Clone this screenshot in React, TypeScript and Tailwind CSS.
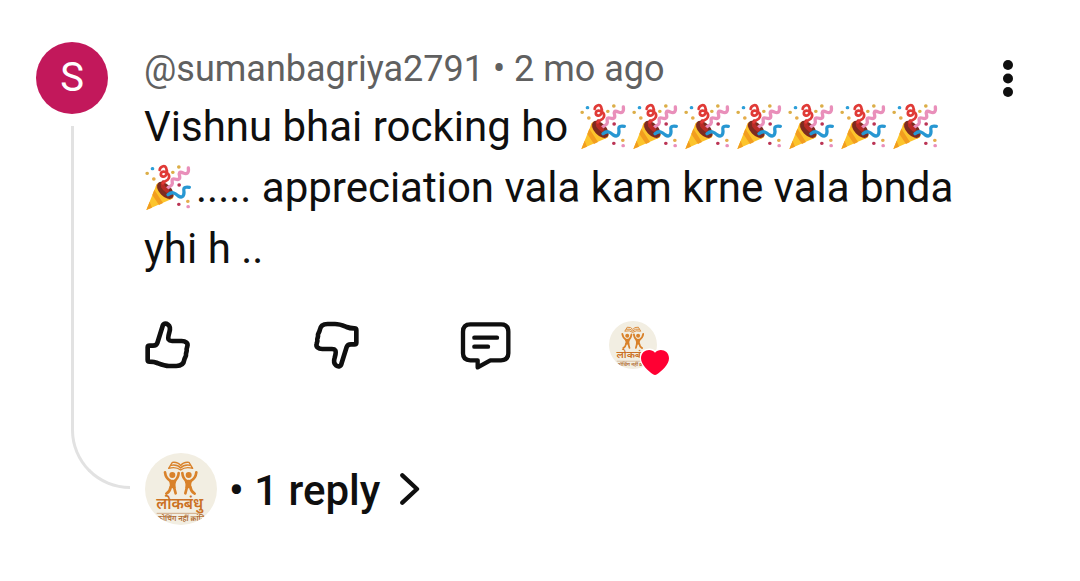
import { clsx } from "clsx"

interface Comment {
  author: string
  time: string
  initial: string
  replies: number
}

const comment: Comment = {
  author: "@sumanbagriya2791",
  time: "2 mo ago",
  initial: "S",
  replies: 1,
}

function PartyPopper() {
  return (
    <svg viewBox="27 22 156 144" role="img" aria-label="🎉" className="inline-block h-12 w-[52px] align-[-9px]">
      <path d="M34 163 L65 86 Q68 78 78 83 L113 117 Q119 125 110 130 Z" fill="#fcc42c" />
      <path d="M34 163 L44 138 L51 156 Z M52 118 L58 102 L84 142 L72 148 Z" fill="#f29d1f" />
      <path d="M65 86 L62 94 Q78 120 104 133 L114 127 Z" fill="#f5a623" />
      <ellipse cx="91" cy="104" rx="31" ry="18" transform="rotate(46 91 104)" fill="#7d2b20" />
      <g fill="none" strokeLinecap="round" strokeLinejoin="round">
        <path d="M160 37 C162 52 156 57 145 52 C132 46 131 53 134 62 C136 74 127 72 119 70 C108 67 112 77 112 84 C111 94 102 90 96 99" stroke="#e98fba" strokeWidth="10" />
        <path d="M96 105 C84 95 79 90 85 80" stroke="#b92b25" strokeWidth="12" />
        <path d="M74 43 C75 32 89 28 93 36 C99 48 94 64 84 63 C74 61 76 48 86 48 C97 48 106 58 101 68 C98 77 85 76 83 83" stroke="#e03a36" strokeWidth="8" />
        <path d="M163 95 C145 92 145 99 147 110 C147 124 139 127 130 121 C119 111 111 107 99 117" stroke="#2797d2" strokeWidth="10" />
      </g>
      <g strokeWidth="10" strokeLinecap="round">
        <path d="M36 53h1 M113 50h1 M131 34h1" stroke="#dcae48" />
        <path d="M56 70h1 M158 137h1" stroke="#e5ad4a" />
        <path d="M52 39h1" stroke="#2d9fd8" />
        <path d="M132 88h1 M131 146h1" stroke="#bb3454" />
        <path d="M159 153h1" stroke="#e98fba" />
      </g>
    </svg>
  )
}

function ThumbIcon({ down = false }: { down?: boolean }) {
  return (
    <svg
      viewBox="32 28 144 150"
      className={clsx("h-[50px] w-12", down && "rotate-180")}
      fill="none"
      stroke="currentColor"
      strokeWidth="14"
      strokeLinejoin="round"
      aria-hidden="true"
    >
      <path d="M46 105 H56 C63 105 67 103 69 97 L84 49 C86 38 94 37 101 42 C108 47 108 55 105 65 C102 76 100 82 103 87 C106 92 110 91 117 91 H142 C154 91 162 98 159 107 C158 111 156 114 157 118 C158 123 154 127 155 132 C156 137 151 140 150 147 C148 161 140 166 126 166 H104 C90 166 79 161 69 157 C60 153 52 153 46 153 Q40 153 40 148 V110 Q40 105 46 105 Z" />
    </svg>
  )
}

function ReplyIcon() {
  return (
    <svg
      viewBox="28 31 156 150"
      className="h-[50px] w-[52px]"
      fill="none"
      stroke="currentColor"
      strokeWidth="13"
      strokeLinecap="round"
      strokeLinejoin="round"
      aria-hidden="true"
    >
      <path d="M62 44 H154 Q176 44 176 66 V131 Q176 152 154 152 H122 L84 173 V152 H62 Q40 152 40 131 V66 Q40 44 62 44 Z" />
      <path d="M74 84 H142 M74 111 H115" />
    </svg>
  )
}

function ChannelAvatar({ className }: { className: string }) {
  return (
    <svg viewBox="0 0 216 216" role="img" aria-label="लोकबंधु" className={clsx("rounded-full", className)}>
      <rect width="216" height="216" fill="#f2eee2" />
      {/* Open book */}
      <g fill="none" stroke="#d9822b" strokeWidth="4" strokeLinejoin="round">
        <path d="M82 28 Q99 26 107 38 Q115 26 132 28 L143 46 Q121 40 107 51 Q93 40 71 46 Z" />
        <path d="M77 37 Q97 33 107 45 Q117 33 137 37" />
      </g>
      {/* Two figures with raised arms */}
      <g fill="#d9822b">
        <circle cx="82" cy="66" r="9" />
        <circle cx="131" cy="66" r="9" />
        <path d="M70 82 Q82 78 95 82 Q90 92 92 106 H73 Q77 92 70 82 Z" />
        <path d="M118 82 Q131 78 143 82 Q136 92 140 106 H121 Q123 92 118 82 Z" />
      </g>
      <g fill="none" stroke="#d9822b" strokeWidth="8" strokeLinecap="round" strokeLinejoin="round">
        <path d="M60 58 Q62 76 77 84 M101 60 Q100 76 88 84 M77 102 Q75 116 64 122 M87 102 L92 121" />
        <path d="M154 58 Q152 76 137 84 M112 60 Q113 76 125 84 M136 102 Q138 116 149 122 M126 102 L121 121" />
      </g>
      <text x="104" y="168" textAnchor="middle" fill="#cb7124" className="font-['Noto_Sans_Devanagari','Noto_Sans',sans-serif] text-[46px] font-semibold">
        लोकबंधु
      </text>
      <path d="M35 181 H166" stroke="#bf8856" strokeWidth="2" />
      <text x="108" y="203" textAnchor="middle" fill="#b06b30" className="font-['Noto_Sans_Devanagari','Noto_Sans',sans-serif] text-[22px] font-semibold">
        कोचिंग नहीं क्रांति
      </text>
    </svg>
  )
}

function HeartBadge() {
  return (
    <svg viewBox="0 0 96 90" className="absolute -right-[14px] -bottom-2 h-[30px] w-8" aria-hidden="true">
      <path
        d="M48 17 C60 2 90 8 90 34 C90 54 68 72 54 82 Q48 86 42 82 C28 72 6 54 6 34 C6 8 36 2 48 17 Z"
        fill="#ff0033"
        stroke="#fff"
        strokeWidth="8"
        paintOrder="stroke"
      />
    </svg>
  )
}

export default function App() {
  return (
    <main className="bg-white px-9 pt-[42px] pb-14 font-['Roboto',sans-serif] text-[#0f0f0f]">
      <article className="flex">
        {/* Avatar and thread line */}
        <div className="flex w-[108px] shrink-0 flex-col">
          <div className="flex size-[72px] items-center justify-center rounded-full bg-[#c2185b] text-[40px] text-white">
            {comment.initial}
          </div>
          <div className="mt-3 mr-[14px] mb-9 ml-[35px] flex-1 rounded-bl-[60px] border-b-3 border-l-3 border-[#e2e2e2]" />
        </div>

        <div className="min-w-0 flex-1">
          <header className="text-[36px] leading-[54px] text-[#606060]">
            {comment.author} • {comment.time}
          </header>
          <p className="text-[42px] leading-[61px]">
            Vishnu bhai rocking ho{" "}
            {Array.from({ length: 8 }, (_, i) => (
              <PartyPopper key={i} />
            ))}
            ..... appreciation vala kam krne vala bnda yhi h ..
          </p>

          {/* Actions */}
          <div className="mt-[41px] flex items-center gap-[98px] pl-px">
            <button type="button" aria-label="Like" className="w-[68px]">
              <ThumbIcon />
            </button>
            <button type="button" aria-label="Dislike" className="w-[50px]">
              <ThumbIcon down />
            </button>
            <button type="button" aria-label="Reply">
              <ReplyIcon />
            </button>
            <div className="relative">
              <ChannelAvatar className="size-12" />
              <HeartBadge />
            </div>
          </div>

          <button type="button" className="mt-[83px] flex items-center pl-px text-[42px] font-medium">
            <ChannelAvatar className="mr-3 size-[72px]" />
            <span className="pt-1 leading-[60px]">• {comment.replies} reply</span>
            <svg viewBox="0 0 60 96" className="ml-5 h-8 w-5" fill="none" stroke="currentColor" strokeWidth="13" strokeLinecap="round" strokeLinejoin="round" aria-hidden="true">
              <path d="M7 7 L51 48 L7 89" />
            </svg>
          </button>
        </div>

        <button type="button" aria-label="More options" className="flex size-[72px] shrink-0 items-center justify-center">
          <svg viewBox="0 0 10 37" className="h-[37px] w-[10px]" fill="currentColor" aria-hidden="true">
            <circle cx="5" cy="5" r="5" />
            <circle cx="5" cy="18.5" r="5" />
            <circle cx="5" cy="32" r="5" />
          </svg>
        </button>
      </article>
    </main>
  )
}
